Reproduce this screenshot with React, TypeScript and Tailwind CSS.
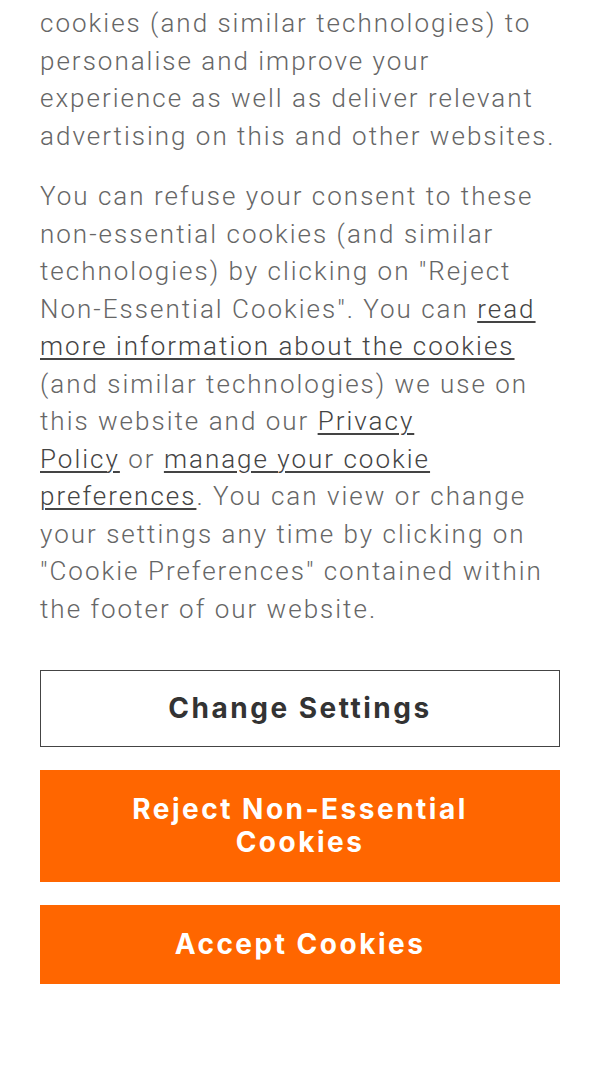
export default function App() {
  const link = "text-[#444] underline underline-offset-[3px] decoration-[1.5px]";

  return (
    <div className="min-h-[1065px] bg-white px-10 pt-[5px] font-['Roboto',sans-serif]">
      <div className="text-[26px] font-light leading-[37.5px] tracking-[2px] text-[#666]">
        <p>
          cookies (and similar technologies) to personalise and improve your
          experience as well as deliver relevant advertising on this and other
          websites.
        </p>
        <p className="mt-[23px]">
          You can refuse your consent to these non-essential cookies (and
          similar technologies) by clicking on "Reject Non-Essential Cookies".
          You can <span className={link}>read more information about the cookies</span>{" "}
          (and similar technologies) we use on this website and our{" "}
          <span className={link}>
            Privacy
            <br />
            Policy
          </span>{" "}
          or <span className={link}>manage your cookie preferences</span>. You
          can view or change your settings any time by clicking on "Cookie
          Preferences" contained within the footer of our website.
        </p>
      </div>

      <div className="mt-[42px] flex flex-col gap-[23px] font-['Inter',sans-serif]">
        <button
          type="button"
          className="border border-[#444] bg-white px-6 py-[21px] text-[28px] font-bold leading-[33px] tracking-[2.5px] text-[#333]"
        >
          Change Settings
        </button>
        <button
          type="button"
          className="border border-[#ff6600] bg-[#ff6600] px-16 py-[22px] text-[28px] font-bold leading-[33px] tracking-[2.5px] text-white"
        >
          Reject Non-Essential Cookies
        </button>
        <button
          type="button"
          className="border border-[#ff6600] bg-[#ff6600] px-6 py-[22px] text-[28px] font-bold leading-[33px] tracking-[2.5px] text-white"
        >
          Accept Cookies
        </button>
      </div>
    </div>
  );
}
